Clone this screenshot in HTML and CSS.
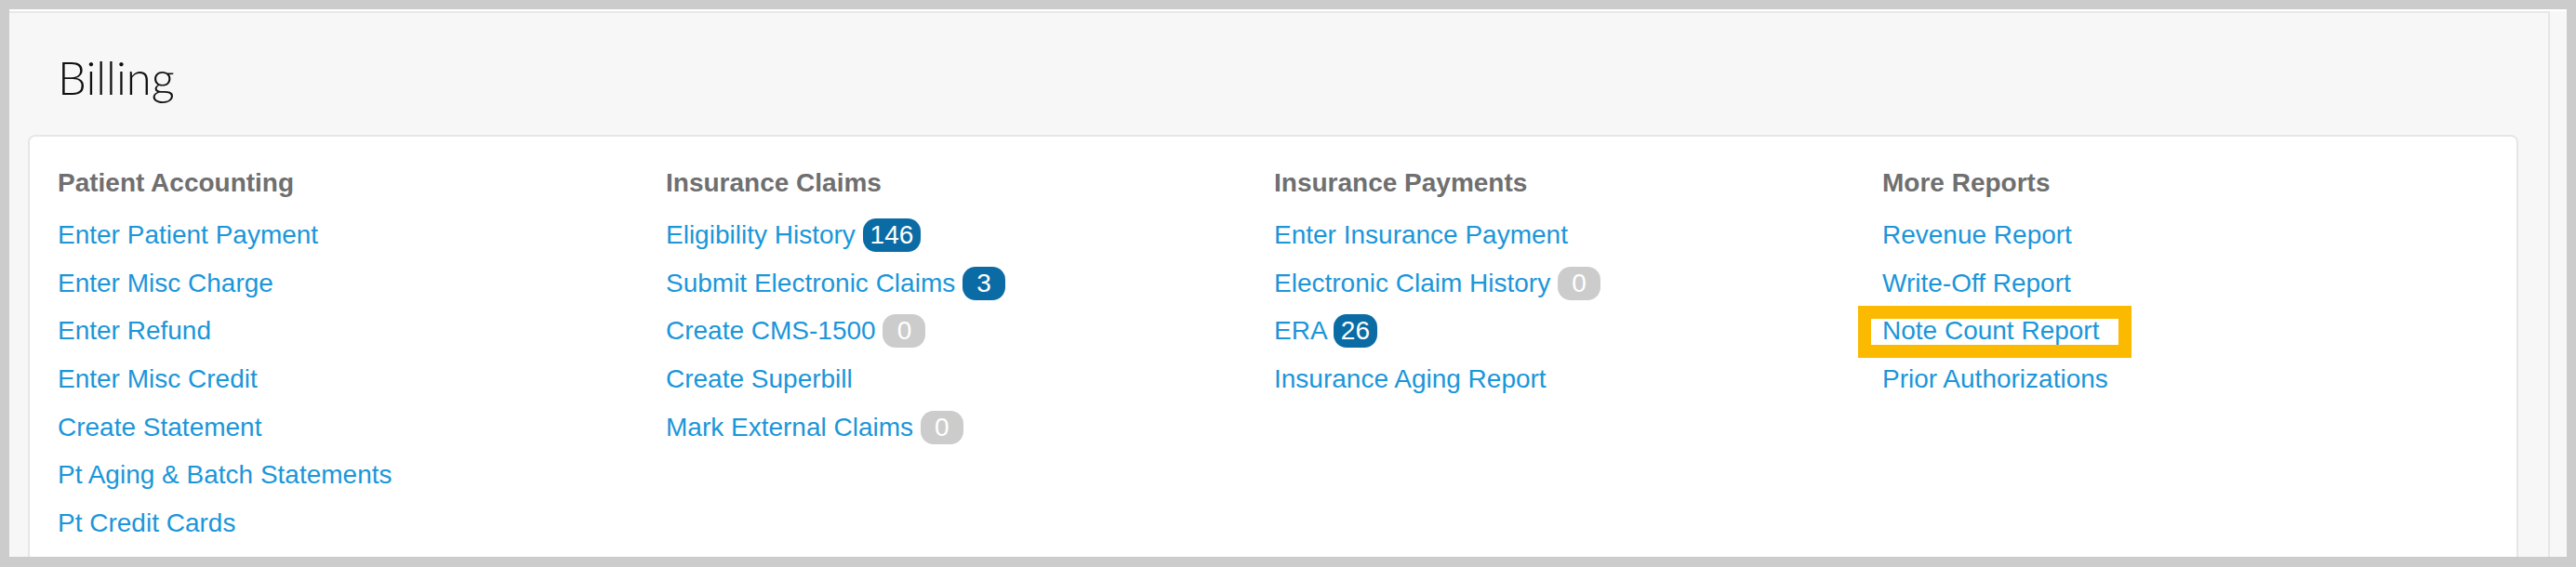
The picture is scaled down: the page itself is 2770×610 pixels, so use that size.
FILE: index.html
```html
<!DOCTYPE html>
<html lang="en">
<head>
<meta charset="utf-8">
<title>Billing</title>
<link rel="stylesheet" href="styles.css">
</head>
<body>
<div class="frame">
  <div class="main">
    <h1 class="page-title">Billing</h1>
    <div class="card">
      <div class="columns">
        <div class="col">
          <h2 class="col-title">Patient Accounting</h2>
          <ul class="links">
            <li><a href="#">Enter Patient Payment</a></li>
            <li><a href="#">Enter Misc Charge</a></li>
            <li><a href="#">Enter Refund</a></li>
            <li><a href="#">Enter Misc Credit</a></li>
            <li><a href="#">Create Statement</a></li>
            <li><a href="#">Pt Aging &amp; Batch Statements</a></li>
            <li><a href="#">Pt Credit Cards</a></li>
          </ul>
        </div>
        <div class="col">
          <h2 class="col-title">Insurance Claims</h2>
          <ul class="links">
            <li><a href="#">Eligibility History</a> <span class="badge badge-blue">146</span></li>
            <li><a href="#">Submit Electronic Claims</a> <span class="badge badge-blue">3</span></li>
            <li><a href="#">Create CMS-1500</a> <span class="badge badge-gray">0</span></li>
            <li><a href="#">Create Superbill</a></li>
            <li><a href="#">Mark External Claims</a> <span class="badge badge-gray">0</span></li>
          </ul>
        </div>
        <div class="col">
          <h2 class="col-title">Insurance Payments</h2>
          <ul class="links">
            <li><a href="#">Enter Insurance Payment</a></li>
            <li><a href="#">Electronic Claim History</a> <span class="badge badge-gray">0</span></li>
            <li><a href="#">ERA</a> <span class="badge badge-blue">26</span></li>
            <li><a href="#">Insurance Aging Report</a></li>
          </ul>
        </div>
        <div class="col">
          <h2 class="col-title">More Reports</h2>
          <ul class="links">
            <li><a href="#">Revenue Report</a></li>
            <li><a href="#">Write-Off Report</a></li>
            <li class="marked"><span class="highlight"></span><a href="#">Note Count Report</a></li>
            <li><a href="#">Prior Authorizations</a></li>
          </ul>
        </div>
      </div>
    </div>
  </div>
  <div class="side"></div>
</div>
</body>
</html>
```

FILE: styles.css
```css
* { box-sizing: border-box; }

html, body {
  margin: 0;
  height: 610px;
  overflow: hidden;
}

body {
  background: #cccccc;
  padding: 10px 10px 11px 10px;
  font-family: "Liberation Sans", Arial, sans-serif;
}

.frame {
  display: flex;
  height: 589px;
  overflow: hidden;
  background: #f7f7f7;
  border-top: 2px solid #ffffff;
}

.main {
  flex: 1;
  border-top: 2px solid #e8e8e8;
  border-right: 2px solid #e6e6e6;
  padding: 0 32px 0 20px;
}

.side {
  width: 18px;
  background: #f7f7f7;
}

.page-title {
  margin: 40px 0 33px 32px;
  font-family: "Lato", "Open Sans", sans-serif;
  font-weight: 300;
  font-size: 49px;
  line-height: 58px;
  color: #111111;
}

.card {
  background: #ffffff;
  border: 2px solid #e6e6e6;
  border-radius: 8px 8px 0 0;
  padding: 30px 28px 40px 30px;
}

.columns {
  display: grid;
  grid-template-columns: repeat(4, 654px);
}

.col-title {
  margin: 0 0 10px 0;
  font-size: 28px;
  line-height: 40px;
  font-weight: 700;
  color: #6f6f6f;
}

.links {
  list-style: none;
  margin: 0;
  padding: 0;
}

.links li {
  font-size: 28px;
  line-height: 51.7px;
  height: 51.7px;
  white-space: nowrap;
}

.links a {
  color: #1b96d9;
  text-decoration: none;
}

.badge {
  display: inline-block;
  min-width: 46px;
  height: 36px;
  padding: 0 8px;
  border-radius: 14px;
  font-size: 28px;
  line-height: 36px;
  text-align: center;
  color: #ffffff;
}

.badge-blue { background: #0b6ca5; }
.badge-gray { background: #cccccc; }

.marked { position: relative; }

.highlight {
  position: absolute;
  left: -26px;
  top: -1px;
  width: 294px;
  height: 56px;
  border: 14px solid #fbb900;
  pointer-events: none;
}
```
